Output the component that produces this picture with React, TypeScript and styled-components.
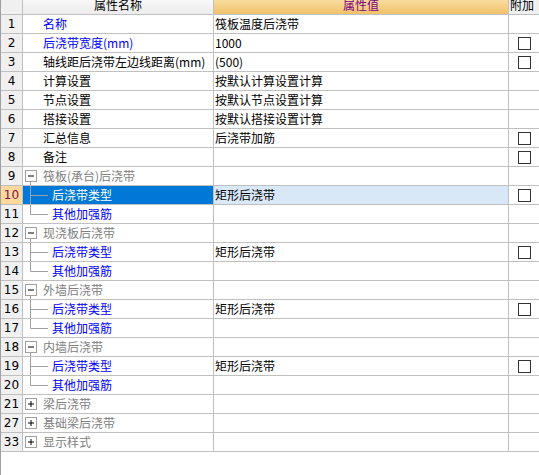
import styled, {createGlobalStyle} from "styled-components";

type Kind = 'prop' | 'group' | 'child'

interface IRow {
    no: number
    name: string
    kind: Kind
    value?: string
    blue?: boolean
    check?: boolean
    open?: boolean
    last?: boolean
    selected?: boolean
}

const rows: IRow[] = [
    {no: 1, name: '名称', kind: 'prop', blue: true, value: '筏板温度后浇带'},
    {no: 2, name: '后浇带宽度(mm)', kind: 'prop', blue: true, value: '1000', check: true},
    {no: 3, name: '轴线距后浇带左边线距离(mm)', kind: 'prop', value: '(500)', check: true},
    {no: 4, name: '计算设置', kind: 'prop', value: '按默认计算设置计算'},
    {no: 5, name: '节点设置', kind: 'prop', value: '按默认节点设置计算'},
    {no: 6, name: '搭接设置', kind: 'prop', value: '按默认搭接设置计算'},
    {no: 7, name: '汇总信息', kind: 'prop', value: '后浇带加筋', check: true},
    {no: 8, name: '备注', kind: 'prop', value: '', check: true},
    {no: 9, name: '筏板(承台)后浇带', kind: 'group', open: true},
    {no: 10, name: '后浇带类型', kind: 'child', value: '矩形后浇带', check: true, selected: true},
    {no: 11, name: '其他加强筋', kind: 'child', last: true},
    {no: 12, name: '现浇板后浇带', kind: 'group', open: true},
    {no: 13, name: '后浇带类型', kind: 'child', value: '矩形后浇带', check: true},
    {no: 14, name: '其他加强筋', kind: 'child', last: true},
    {no: 15, name: '外墙后浇带', kind: 'group', open: true},
    {no: 16, name: '后浇带类型', kind: 'child', value: '矩形后浇带', check: true},
    {no: 17, name: '其他加强筋', kind: 'child', last: true},
    {no: 18, name: '内墙后浇带', kind: 'group', open: true},
    {no: 19, name: '后浇带类型', kind: 'child', value: '矩形后浇带', check: true},
    {no: 20, name: '其他加强筋', kind: 'child', last: true},
    {no: 21, name: '梁后浇带', kind: 'group'},
    {no: 27, name: '基础梁后浇带', kind: 'group'},
    {no: 33, name: '显示样式', kind: 'group'},
]

const GlobalStyle = createGlobalStyle`
  html, body {
    margin: 0;
    padding: 0;
    background: #ffffff;
    overflow: hidden;
  }
  body {
    font-family: "Noto Sans CJK SC", "DejaVu Sans", sans-serif;
    font-size: 12px;
  }
`

const TREE = '#a0a0a0'

// +/- box of a group row, with the start of the branch line under it
function ExpandBox({open}: { open: boolean }) {
    return (
        <svg width="20" height="18" viewBox="0 0 20 18">
            <rect x="2.5" y="3.5" width="11" height="11" fill="#fff" stroke={TREE}/>
            <line x1="5" y1="9" x2="11" y2="9" stroke="#000"/>
            {!open && <line x1="8" y1="6" x2="8" y2="12" stroke="#000"/>}
            {open && <line x1="7.5" y1="15" x2="7.5" y2="18" stroke={TREE}/>}
        </svg>
    )
}

function TreeGuide({last}: { last: boolean }) {
    return (
        <svg width="29" height="18" viewBox="0 0 29 18">
            <line x1="7.5" y1="0" x2="7.5" y2={last ? 9.5 : 18} stroke={TREE}/>
            <line x1="7.5" y1="9.5" x2="25" y2="9.5" stroke={TREE}/>
        </svg>
    )
}

function App() {
    return (
        <Frame>
            <GlobalStyle/>
            <Grid>
                <HeaderRow>
                    <HeadNum/>
                    <HeadName><HeadText>属性名称</HeadText></HeadName>
                    <HeadValue><HeadText>属性值</HeadText></HeadValue>
                    <HeadAttach><HeadText>附加</HeadText></HeadAttach>
                </HeaderRow>
                {rows.map((r) =>
                    <Row key={r.no}>
                        <NumCell $selected={r.selected}>{r.no}</NumCell>
                        <NameCell $selected={r.selected} $kind={r.kind}>
                            {r.kind === 'group' && <ExpandBox open={!!r.open}/>}
                            {r.kind === 'child' && <TreeGuide last={!!r.last}/>}
                            <NameText $kind={r.kind} $blue={r.blue} $selected={r.selected}>{r.name}</NameText>
                        </NameCell>
                        <ValueCell $selected={r.selected}>{r.value}</ValueCell>
                        <AttachCell>{r.check && <Check/>}</AttachCell>
                    </Row>
                )}
            </Grid>
        </Frame>
    )
}

const Frame = styled.div`
  width: 539px;
  height: 475px;
  box-sizing: border-box;
  border-left: 1px solid #a0a0a0;
  overflow: hidden;
  background: #fff;
`

const Grid = styled.div`
  display: flex;
  flex-direction: column;
  width: 600px;
`

const HeaderRow = styled.div`
  display: grid;
  grid-template-columns: 22px 191px 295px 40px;
  height: 15px;
  overflow: hidden;
`

const HeadCell = styled.div`
  box-sizing: border-box;
  border-right: 1px solid #c0c0c0;
  border-bottom: 1px solid #c0c0c0;
  overflow: hidden;
  display: flex;
  justify-content: center;
  background: #f0f0f0;
`

const HeadNum = styled(HeadCell)``

const HeadName = styled(HeadCell)`
  background: linear-gradient(#f8f8f8, #ececec);
  color: #000;
`

const HeadValue = styled(HeadCell)`
  background: linear-gradient(#f9dc9e, #f0c26a);
  color: #800080;
`

const HeadAttach = styled(HeadCell)`
  justify-content: flex-start;
  padding-left: 1px;
  color: #000;
`

// the header is scrolled up a few pixels, so its labels are cut at the top
const HeadText = styled.span`
  line-height: 19px;
  margin-top: -5px;
  white-space: nowrap;
`

const Row = styled.div`
  display: grid;
  grid-template-columns: 22px 191px 295px 40px;
  height: 19px;
`

const Cell = styled.div`
  box-sizing: border-box;
  border-right: 1px solid #c0c0c0;
  border-bottom: 1px solid #c0c0c0;
  display: flex;
  align-items: center;
  white-space: nowrap;
  overflow: hidden;
  line-height: 18px;
`

const NumCell = styled(Cell)<{ $selected?: boolean }>`
  justify-content: center;
  background: ${(p) => p.$selected ? '#ffd89c' : '#f0f0f0'};
  color: ${(p) => p.$selected ? '#80104a' : '#000'};
  font-family: "DejaVu Sans", sans-serif;
  font-size: 12px;
`

const NameCell = styled(Cell)<{ $selected?: boolean, $kind: Kind }>`
  background: ${(p) => p.$selected ? '#0078d7' : '#fff'};
  padding-left: ${(p) => p.$kind === 'prop' ? '20px' : '0'};
  svg {
    flex: none;
    display: block;
  }
`

const NameText = styled.span<{ $kind: Kind, $blue?: boolean, $selected?: boolean }>`
  color: ${(p) => p.$selected ? '#fff'
          : p.$kind === 'group' ? '#808080'
                  : (p.$kind === 'child' || p.$blue) ? '#0000ff' : '#000'};
`

const ValueCell = styled(Cell)<{ $selected?: boolean }>`
  background: ${(p) => p.$selected ? '#d9e8f7' : '#fff'};
  padding-left: 1px;
  color: #000;
`

const AttachCell = styled(Cell)`
  padding-left: 9px;
  background: #fff;
`

const Check = styled.span`
  width: 13px;
  height: 13px;
  box-sizing: border-box;
  border: 1px solid #333;
  background: #fff;
  margin-top: 1px;
`

export default App
